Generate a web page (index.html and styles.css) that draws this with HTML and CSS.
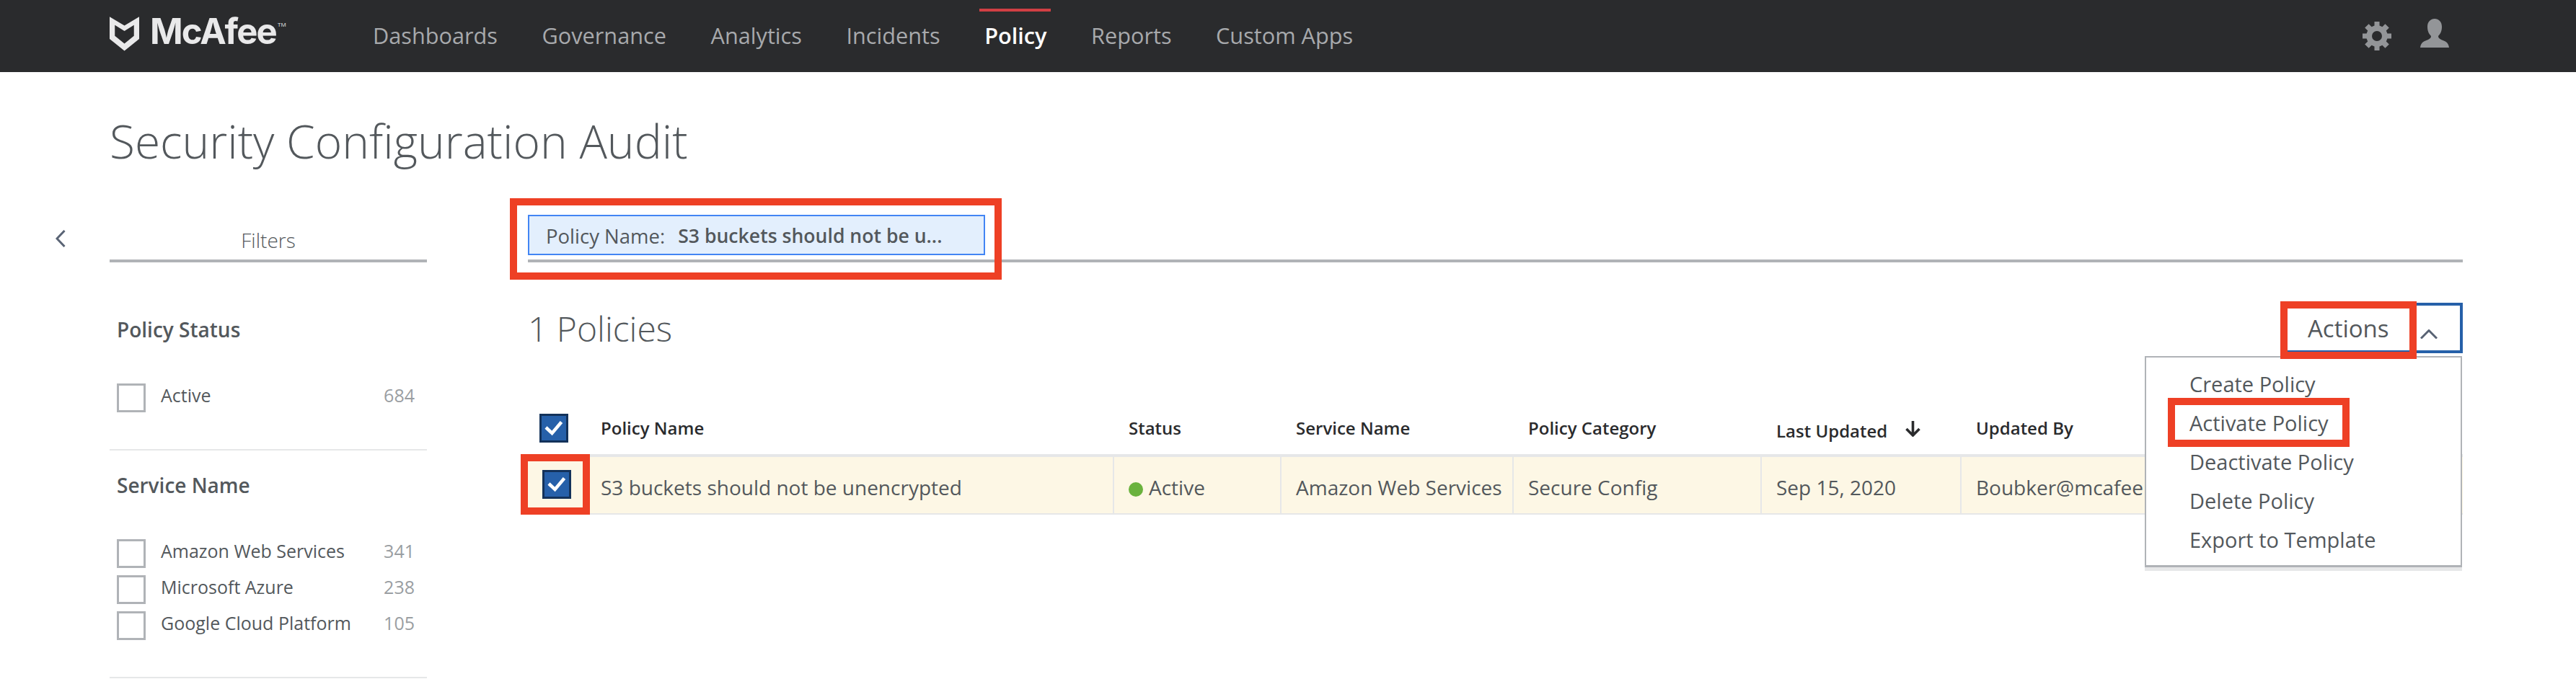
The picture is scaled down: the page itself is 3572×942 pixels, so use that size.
FILE: index.html
```html
<!DOCTYPE html>
<html lang="en-US">
<head>
<meta charset="utf-8">
<title>Security Configuration Audit</title>
<link rel="stylesheet" href="styles.css">
</head>
<body>

<header class="topbar">
	<a class="logo">
		<svg class="logo-shield" viewBox="0 0 41.3 48" width="41" height="48">
			<path fill="#e9e9ea" fill-rule="evenodd" d="M0 0 L20.7 12.3 L41.3 0 V31 L20.7 47.7 L0 31 Z M7.3 11.7 V26.7 L20.7 37.7 L34 26.7 V11.7 L20.7 20 Z"/>
		</svg>
		<span class="logo-text">McAfee</span><span class="logo-tm">TM</span>
	</a>
	<nav class="mainnav">
		<a>Dashboards</a>
		<a>Governance</a>
		<a>Analytics</a>
		<a>Incidents</a>
		<a class="current">Policy</a>
		<a>Reports</a>
		<a>Custom Apps</a>
	</nav>
	<div class="topicons">
		<svg viewBox="0 0 40 40" width="40" height="40">
			<path fill="#939598" fill-rule="evenodd" d="M16.5 0 H23.5 V5.6 L27.4 7.2 L31.4 3.2 L36.8 8.6 L32.8 12.6 L34.4 16.5 H40 V23.5 H34.4 L32.8 27.4 L36.8 31.4 L31.4 36.8 L27.4 32.8 L23.5 34.4 V40 H16.5 V34.4 L12.6 32.8 L8.6 36.8 L3.2 31.4 L7.2 27.4 L5.6 23.5 H0 V16.5 H5.6 L7.2 12.6 L3.2 8.6 L8.6 3.2 L12.6 7.2 L16.5 5.6 Z M20 13 A7 7 0 1 0 20 27 A7 7 0 1 0 20 13 Z"/>
		</svg>
		<svg class="usericon" viewBox="0 0 40 40" width="40" height="40">
			<path fill="#939598" d="M20 0 C25.5 0 30 4 30 11 C30 17 28 21 25 24 C25 26 26 27.5 29 29 C34 31 39 32 40 40 H0 C1 32 6 31 11 29 C14 27.5 15 26 15 24 C12 21 10 17 10 11 C10 4 14.5 0 20 0 Z"/>
		</svg>
	</div>
</header>

<h1 class="pagetitle">Security Configuration Audit</h1>

<div class="layout">
	<div class="collapse">
		<svg viewBox="0 0 14 24" width="14" height="24"><path d="M12.5 1 L2 12 L12.5 23" fill="none" stroke="#5a6475" stroke-width="3"/></svg>
	</div>

	<aside class="filters">
		<div class="filters-title">Filters</div>

		<section class="filter-group">
			<h3>Policy Status</h3>
			<label class="filter-row"><span class="box"></span><span class="name">Active</span><span class="count">684</span></label>
		</section>

		<section class="filter-group">
			<h3>Service Name</h3>
			<label class="filter-row"><span class="box"></span><span class="name">Amazon Web Services</span><span class="count">341</span></label>
			<label class="filter-row"><span class="box"></span><span class="name">Microsoft Azure</span><span class="count">238</span></label>
			<label class="filter-row"><span class="box"></span><span class="name">Google Cloud Platform</span><span class="count">105</span></label>
		</section>
	</aside>

	<main class="content">
		<div class="chipbar">
			<div class="chip"><span class="chip-key">Policy Name:</span><span class="chip-val">S3 buckets should not be u...</span></div>
		</div>

		<div class="listhead">
			<h2>1 Policies</h2>
			<div class="actions">
				<span class="actions-label">Actions</span>
				<svg viewBox="0 0 24 13" width="24" height="13"><path d="M1 12.5 L12 1.5 L23 12.5" fill="none" stroke="#5a6475" stroke-width="3"/></svg>
			</div>
		</div>

		<div class="policytable">
			<div class="row headrow">
				<div class="cell c-check"><span class="check"><svg viewBox="0 0 34 34" width="34" height="34"><path d="M6 16 L14.5 24 L27.5 8.5" fill="none" stroke="#fff" stroke-width="4.5"/></svg></span></div>
				<div class="cell c-name">Policy Name</div>
				<div class="cell c-status">Status</div>
				<div class="cell c-service">Service Name</div>
				<div class="cell c-cat">Policy Category</div>
				<div class="cell c-date">Last Updated<svg viewBox="0 0 21 23" width="21" height="23"><path d="M10.5 1 V21 M1.5 12 L10.5 21 L19.5 12" fill="none" stroke="#2a2b2d" stroke-width="3.6"/></svg></div>
				<div class="cell c-by">Updated By</div>
			</div>
			<div class="row datarow">
				<div class="cell c-check"><span class="check"><svg viewBox="0 0 34 34" width="34" height="34"><path d="M6 16 L14.5 24 L27.5 8.5" fill="none" stroke="#fff" stroke-width="4.5"/></svg></span></div>
				<div class="cell c-name">S3 buckets should not be unencrypted</div>
				<div class="cell c-status"><span class="dot"></span>Active</div>
				<div class="cell c-service">Amazon Web Services</div>
				<div class="cell c-cat">Secure Config</div>
				<div class="cell c-date">Sep 15, 2020</div>
				<div class="cell c-by">Boubker@mcafee</div>
			</div>
		</div>
	</main>
</div>

<!-- dropdown hanging over the table -->
<ul class="actionmenu">
	<li>Create Policy</li>
	<li>Activate Policy</li>
	<li>Deactivate Policy</li>
	<li>Delete Policy</li>
	<li>Export to Template</li>
</ul>

<!-- red marks drawn over the screenshot -->
<div class="mark mark-chip"></div>
<div class="mark mark-actions"></div>
<div class="mark mark-activate"></div>
<div class="mark mark-row"></div>

</body>
</html>
```

FILE: styles.css
```css
html, body {
	margin: 0;
	height: 942px;
	overflow: hidden;
	background: #fff;
}
body {
	position: relative;
	font-family: "Open Sans", sans-serif;
	color: #53585c;
}
h1, h2, h3, ul {
	margin: 0;
	padding: 0;
}

/* top bar */
.topbar {
	display: flex;
	align-items: center;
	height: 100px;
	padding: 0 176px 0 152px;
	background: #2a2b2d;
}
.logo {
	display: flex;
	align-items: flex-start;
	flex: none;
	width: 365px;
	height: 48px;
	margin-top: -6px;
	color: #e9e9ea;
}
.logo-text {
	margin-left: 15px;
	font-family: Inter, "Open Sans", sans-serif;
	font-size: 49px;
	font-weight: 700;
	line-height: 42px;
	letter-spacing: -1.8px;
}
.logo-tm {
	margin: 6px 0 0 2px;
	font-size: 8px;
	line-height: 10px;
}
.mainnav {
	display: flex;
	gap: 61.5px;
	margin-top: -2px;
	font-size: 30.7px;
	color: #a7a9ac;
}
.mainnav a {
	position: relative;
	line-height: 40px;
}
.mainnav .current {
	color: #fff;
	font-weight: 600;
}
.mainnav .current::before {
	content: "";
	position: absolute;
	left: -7px;
	right: -5px;
	top: -17px;
	height: 4px;
	background: #d13f44;
}
.topicons {
	display: flex;
	gap: 40px;
	margin-left: auto;
}
.usericon {
	margin-top: -4px;
}

.pagetitle {
	padding: 63px 0 0 152px;
	font-size: 64px;
	font-weight: 300;
	line-height: 66px;
	color: #53585c;
}

/* page body */
.layout {
	display: flex;
	padding: 0 157px 0 77px;
	margin-top: 46px;
}
.collapse {
	width: 75px;
	flex: none;
	padding-top: 44px;
}
.filters {
	width: 440px;
	flex: none;
	padding-top: 33px;
}
.filters-title {
	height: 52px;
	border-bottom: 4px solid #b0b3b7;
	font-size: 28px;
	font-weight: 300;
	line-height: 50px;
	text-align: center;
}
.filter-group {
	padding: 0 10px 51px;
	border-bottom: 2px solid #e6e7e8;
}
.filter-group h3 {
	padding-top: 75px;
	font-size: 28px;
	font-weight: 600;
	line-height: 36px;
}
.filter-group + .filter-group h3 {
	padding-top: 30px;
}
.filter-row {
	display: flex;
	align-items: flex-start;
	height: 40px;
	margin-top: 10px;
	font-size: 25px;
	line-height: 32px;
}
.filter-group h3 + .filter-row {
	margin-top: 57px;
}
.box {
	width: 40px;
	height: 40px;
	box-sizing: border-box;
	flex: none;
	border: 3px solid #b0b3b7;
}
.name {
	margin-left: 21px;
}
.count {
	margin-left: auto;
	padding-right: 7px;
	color: #9a9ea2;
}

.content {
	flex: 1;
	margin-left: 140px;
}
.chipbar {
	height: 62px;
	padding-top: 23px;
	border-bottom: 4px solid #b0b3b7;
}
.chip {
	display: flex;
	align-items: center;
	width: 634px;
	height: 56px;
	box-sizing: border-box;
	padding: 2px 0 0 23px;
	border: 2px solid #4285f4;
	background: #e3effd;
	font-size: 27.5px;
	white-space: nowrap;
}
.chip-val {
	margin-left: 18px;
	font-size: 26.6px;
	font-weight: 600;
}

.listhead {
	display: flex;
	justify-content: space-between;
	align-items: flex-start;
	height: 210px;
	padding-top: 56px;
	box-sizing: border-box;
}
.listhead h2 {
	font-size: 48px;
	font-weight: 300;
	line-height: 72px;
}
.actions {
	display: flex;
	align-items: center;
	width: 250px;
	height: 70px;
	box-sizing: border-box;
	border: 4px solid #2660a9;
}
.actions-label {
	margin-left: 31px;
	font-size: 33px;
	font-weight: 500;
}
.actions svg {
	margin: 16px 0 0 43px;
}

/* table */
.row {
	display: flex;
}
.cell {
	box-sizing: border-box;
	padding-left: 20px;
	white-space: nowrap;
	overflow: hidden;
}
.c-check { width: 81px; padding-left: 0; }
.c-name { width: 732px; }
.c-status { width: 232px; }
.c-service { width: 322px; }
.c-cat { width: 344px; }
.c-date { width: 277px; }
.c-by { flex: 1; }

.headrow {
	height: 56px;
	border-bottom: 4px solid #e6e7e8;
	font-size: 24px;
	font-weight: 600;
	color: #2a2b2d;
}
.headrow .cell {
	line-height: 40px;
}
.headrow .c-check { padding-left: 16px; }
.headrow .c-date { line-height: 48px; }
.headrow .c-date svg {
	margin-left: 25px;
	vertical-align: 1px;
}
.datarow {
	height: 78px;
	border-bottom: 2px solid #e6e7e8;
	background: #fdf7e5;
	font-size: 28px;
}
.datarow .cell {
	height: 78px;
	line-height: 84px;
	border-right: 2px solid #e6e7e8;
}
.datarow .c-by { border-right: 0; }
.datarow .c-check { padding: 18px 0 0 20px; border-right: 0; line-height: 0; }
.check {
	display: flex;
	align-items: center;
	justify-content: center;
	width: 40px;
	height: 40px;
	box-sizing: border-box;
	border: 3px solid #13325a;
	background: #2660a9;
}
.dot {
	display: inline-block;
	width: 20px;
	height: 20px;
	margin-right: 8px;
	border-radius: 50%;
	background: #6ab23d;
	vertical-align: -2px;
}

.actionmenu {
	position: absolute;
	top: 494px;
	left: 2974px;
	width: 440px;
	height: 293px;
	box-sizing: border-box;
	padding: 10px 0 0 60px;
	border: 2px solid #b0b3b7;
	border-bottom-width: 3px;
	box-shadow: 0 5px 0 #e6e7e8;
	background: #fff;
	list-style: none;
	font-size: 29px;
	line-height: 54px;
	font-weight: 500;
}

.mark {
	position: absolute;
	box-sizing: border-box;
	border: 10px solid #ee4025;
}
.mark-chip { left: 707px; top: 275px; width: 682px; height: 113px; }
.mark-actions { left: 3162px; top: 418px; width: 189px; height: 80px; }
.mark-activate { left: 3006px; top: 552px; width: 252px; height: 68px; }
.mark-row { left: 722px; top: 630px; width: 96px; height: 84px; }
```
